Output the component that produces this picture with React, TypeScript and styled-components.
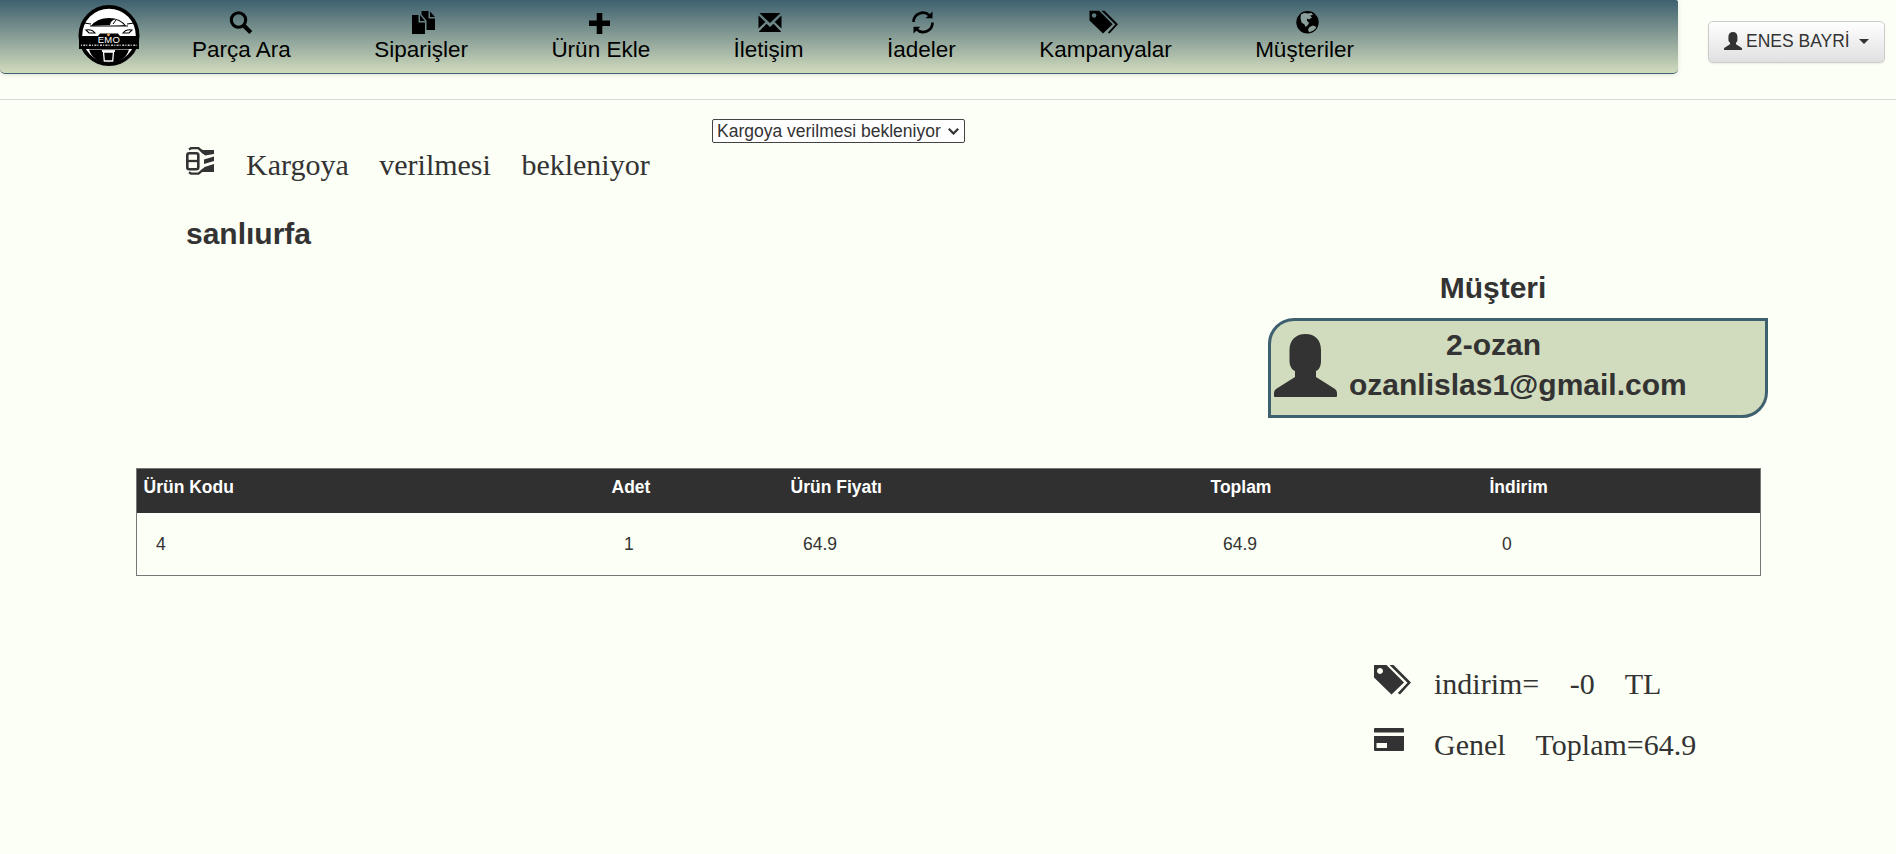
import React from "react";
import styled, { createGlobalStyle } from "styled-components";

const GlobalStyle = createGlobalStyle`
  * { box-sizing: border-box; }
  body {
    margin: 0;
    background: #fcfff5;
    color: #333;
    font-family: "Liberation Sans", Arial, sans-serif;
    font-size: 17.5px;
    line-height: 25px;
  }
`;

const Page = styled.div`
  min-height: 854px;
`;

const Header = styled.header`
  display: flex;
  align-items: flex-start;
  height: 100px;
  border-bottom: 1px solid #d5dbd8;
`;

const NavBar = styled.nav`
  display: flex;
  align-items: flex-start;
  width: 1678px;
  height: 74px;
  padding-left: 78px;
  border-bottom: 1px solid #3e606f;
  border-radius: 0 2px 5px 5px;
  background: linear-gradient(#3e606f, #d1dbbd);
  box-shadow: 0 1px 5px rgba(0, 0, 0, 0.12);
`;

const Logo = styled.svg`
  width: 62px;
  height: 63px;
  margin-top: 4px;
`;

const NavList = styled.ul`
  display: flex;
  gap: 83.4px;
  margin: 0 0 0 52px;
  padding: 10px 0 0;
  list-style: none;
`;

const NavItem = styled.li`
  display: flex;
  flex-direction: column;
  align-items: center;
  gap: 3px;
  color: #000;
  font-size: 22.5px;
  line-height: 26px;
  white-space: nowrap;
`;

const NavIcon = styled.span<{ $shift: number }>`
  transform: translateX(${(p) => p.$shift}px);
`;

const Icon = styled.svg<{ $w: number; $h: number }>`
  display: block;
  flex: none;
  width: ${(p) => p.$w}px;
  height: ${(p) => p.$h}px;
  overflow: visible;
  fill: currentColor;
`;

const UserButton = styled.button`
  display: flex;
  align-items: center;
  width: 177px;
  height: 42px;
  margin: 21px 0 0 30px;
  padding: 0 0 2px 15px;
  border: 1px solid #ccc;
  border-radius: 5px;
  background: linear-gradient(#fff, #e0e0e0);
  box-shadow: 0 1px 2px rgba(0, 0, 0, 0.08);
  color: #333;
  font: 17.5px "Liberation Sans", Arial, sans-serif;
  white-space: nowrap;
`;

const UserName = styled.span`
  margin-left: 4px;
`;

const Caret = styled.span`
  margin: 1px 0 0 9px;
  border: 5px solid transparent;
  border-top-color: #333;
  border-bottom: 0;
`;

const Main = styled.main`
  padding: 18px 135px 0 136px;
`;

const TopRow = styled.section`
  display: flex;
  align-items: flex-start;
  height: 150px;
  padding-left: 50px;
`;

const OrderInfo = styled.div`
  width: 526px;
  padding-top: 27px;
`;

const Line = styled.p`
  display: flex;
  margin: 0;
  font: 30px/40px "Liberation Serif", "Times New Roman", serif;
  word-spacing: 23px;
  white-space: nowrap;
`;

const IconSlot = styled.span<{ $top?: number }>`
  width: 60px;
  padding-top: ${(p) => p.$top ?? 2}px;
`;

const Title = styled.h3`
  margin: 0;
  font-size: 30px;
  line-height: 40px;
  font-weight: bold;
`;

const City = styled(Title)`
  margin-top: 29px;
`;

const SelectBox = styled.div`
  position: relative;
  width: 253px;
  height: 24px;
  margin-top: 1px;
`;

const StatusSelect = styled.select`
  display: block;
  appearance: none;
  width: 253px;
  height: 24px;
  padding: 0 0 1px 4px;
  border: 1px solid #444;
  border-radius: 2px;
  background: #fff;
  color: #333;
  font: 17.5px "Liberation Sans", Arial, sans-serif;
`;

const Chevron = styled.svg`
  position: absolute;
  top: 9px;
  right: 6px;
  width: 11px;
  height: 7px;
  fill: none;
  stroke: #333;
  stroke-width: 2.2;
  pointer-events: none;
`;

const Customer = styled.section`
  width: 500px;
  margin-left: 1132px;
`;

const CustomerTitle = styled(Title)`
  width: 450px;
  text-align: center;
`;

const CustomerCard = styled.div`
  display: flex;
  width: 500px;
  height: 100px;
  margin-top: 10px;
  padding: 4px 0 0 3px;
  border: 3px solid #3e606f;
  border-radius: 26px 0;
  background: #d1dbbd;
`;

const Portrait = styled.div`
  width: 75px;
  padding-top: 9px;
`;

const CustomerText = styled.div`
  display: flex;
  flex-direction: column;
`;

const CustomerName = styled(Title)`
  margin-left: 97px;
`;

const Table = styled.table`
  width: 1625px;
  margin-top: 50px;
  border: 1px solid #777;
  border-spacing: 0;
  table-layout: fixed;
`;

const Th = styled.th<{ $w?: number }>`
  width: ${(p) => (p.$w ? p.$w + "px" : "auto")};
  height: 44px;
  padding: 6px 6px 13px 6.5px;
  background: #303030;
  color: #fff;
  text-align: left;
  vertical-align: top;
`;

const Td = styled.td`
  height: 62px;
  padding: 19px 18px 18px 19px;
  text-align: left;
  vertical-align: top;
`;

const Totals = styled.section`
  display: flex;
  flex-direction: column;
  gap: 21px;
  margin: 88px 0 0 1238px;
`;

const LogoMark = () => (
  <Logo viewBox="0 0 62 63">
    <circle cx="31" cy="31.5" r="30.5" fill="#000" />
    <circle cx="31" cy="31.5" r="26.8" fill="#fff" />
    <path d="M13 22Q19 14 31 14Q43 14 48 22Q36 20 13 22Z" fill="#000" />
    <path d="M32 21Q33 16 37 15.5Q43 17 46 21Z" fill="#fff" />
    <path d="M35 20l3-4" stroke="#000" />
    <path d="M12 22H50M6 19l7 1M49 20l7-1M8 26q6-1 9 3h-6zM54 26q-6-1-9 3h6z" fill="none" stroke="#000" strokeWidth="1.1" />
    <path d="M1 32H20L22 29.5H40L42 32H61V45H1Z" fill="#000" />
    <circle cx="30.5" cy="30.8" r="1.4" fill="#e8a95c" />
    <text x="31" y="39.3" fill="#fff" textAnchor="middle" fontFamily="Liberation Sans" fontSize="9.5" letterSpacing=".3">EMO</text>
    <path d="M3 41.3H59" stroke="#ccc" strokeWidth="1.6" strokeDasharray="1 1.3 2 1 1 1.6 2 1.2" />
    <path d="M11 45.5H51Q47 58.5 31 58.5Q15 58.5 11 45.5Z" fill="#000" />
    <path d="M25.5 48H35.5L34.7 57H26.3Z" fill="#000" stroke="#fff" strokeWidth="1.3" />
    <path d="M24 47H37" stroke="#fff" strokeWidth="1.8" />
  </Logo>
);

const SearchIcon = () => (
  <Icon $w={24} $h={24} viewBox="0 0 24 24">
    <circle cx="9.5" cy="10" r="7.2" fill="none" stroke="currentColor" strokeWidth="3.1" />
    <path d="M14.5 15.2L21.8 22.5" stroke="currentColor" strokeWidth="4.2" />
  </Icon>
);

const CopyIcon = () => (
  <Icon $w={23} $h={24} viewBox="0 0 23 24">
    <path d="M0 5H6.5V12.5H13V24H0ZM8 5L13 11H8Z" />
    <path d="M9.5 1H16.5V8.5H23V20H14.5V10.5L9.5 4.5ZM18 1.5L23 7H18Z" />
  </Icon>
);

const PlusIcon = () => (
  <Icon $w={21} $h={24} viewBox="0 0 21 24">
    <path d="M7.7 3h5.6v7.5H21v5.4h-7.7V24H7.7v-8.1H0v-5.4h7.7z" />
  </Icon>
);

const MailIcon = () => (
  <Icon $w={23} $h={24} viewBox="0 0 23 24">
    <path d="M1 3H22L11.5 13ZM0 5.5L6.8 12L0 18.5ZM23 5.5V18.5L16.2 12ZM8 13.8L11.5 17L15 13.8L22.5 21.5V22H.5V21.5Z" />
  </Icon>
);

const RefreshIcon = () => (
  <Icon $w={22} $h={24} viewBox="0 0 22 24">
    <path d="M1.5 12A9.4 9.4 0 0 1 17.5 5.5M20.5 12.5A9.4 9.4 0 0 1 4.5 19.3" fill="none" stroke="currentColor" strokeWidth="2.6" />
    <path d="M20.5 1.5V8.3H13.7ZM1.5 23.5V16.7H8.3Z" />
  </Icon>
);

const TagsIcon = ({ w = 28.5, h = 24 }: { w?: number; h?: number }) => (
  <Icon $w={w} $h={h} viewBox="0 0 37 31">
    <path fillRule="evenodd" d="M0 1H12.5L30 18.5L17.5 30.5L0 13.5ZM6 4a3 3 0 1 0 .01 0Z" />
    <path d="M15.5 1H19.5L37 18.5L26 30.5L23.8 29L33.5 18.8Z" />
  </Icon>
);

const GlobeIcon = () => (
  <Icon $w={23} $h={24} viewBox="0 0 23 24">
    <circle cx="11.5" cy="12.3" r="11.2" />
    <path d="M5 4.5L8 3L12 3.5L15.5 3L17 5L14 5.5L16 7.5L13 9.5L11 8.5V11L13 12.5L12 15L9.5 17L8.5 14.5L5.5 12.5L4.5 8ZM13.5 17L17 15.5L20.5 17Q18 21.5 13 22.2L12 19.5Z" fill="#8a9e9a" />
  </Icon>
);

const UserIcon = ({ w, h }: { w: number; h: number }) => (
  <Icon $w={w} $h={h} viewBox="0 0 63 63">
    <path d="M15.5 16C15.5 6 22 0 31.5 0S47 6 47 16V27C47 32 45 36 42 37V43L61 55Q63 56.5 63 59V62Q63 63 62 63H1Q0 63 0 62V59Q0 56.5 2 55L21 43V37C18 36 15.5 32 15.5 27Z" />
  </Icon>
);

const PackageIcon = () => (
  <Icon $w={28} $h={28} viewBox="0 0 28 28">
    <path d="M3 2.5L5 1.2H12.5L18 6.5M3 25.3L5 26.6H12.5L18 22" fill="none" stroke="currentColor" strokeWidth="2.3" />
    <rect x="1.3" y="6.2" width="11" height="16" rx="2" fill="none" stroke="currentColor" strokeWidth="2.6" />
    <path d="M1 14H12" stroke="currentColor" strokeWidth="2.3" />
    <path d="M12.5 1L17 3H28V7L19 8.5L16 5.5ZM18 12.5L28 9.5V14L18 17ZM28 17V25H15L18.5 20Z" />
  </Icon>
);

const CreditIcon = () => (
  <Icon $w={30} $h={23} viewBox="0 0 30 23">
    <path fillRule="evenodd" d="M1 0H29Q30 0 30 1V4.5H0V1Q0 0 1 0ZM0 8H30V22Q30 23 29 23H1Q0 23 0 22ZM2.5 15V20H13V15Z" />
  </Icon>
);

const menu = [
  { label: "Parça Ara", icon: <SearchIcon />, shift: 0 },
  { label: "Siparişler", icon: <CopyIcon />, shift: 2 },
  { label: "Ürün Ekle", icon: <PlusIcon />, shift: -1 },
  { label: "İletişim", icon: <MailIcon />, shift: 1.5 },
  { label: "İadeler", icon: <RefreshIcon />, shift: 2 },
  { label: "Kampanyalar", icon: <TagsIcon />, shift: -1.5 },
  { label: "Müşteriler", icon: <GlobeIcon />, shift: 3 },
];

const columns = [
  { label: "Ürün Kodu", width: 468, value: "4" },
  { label: "Adet", width: 179, value: "1" },
  { label: "Ürün Fiyatı", width: 420, value: "64.9" },
  { label: "Toplam", width: 279, value: "64.9" },
  { label: "İndirim", value: "0" },
];

export default function App() {
  return (
    <Page>
      <GlobalStyle />
      <Header>
        <NavBar>
          <LogoMark />
          <NavList>
            {menu.map((m) => (
              <NavItem key={m.label}>
                <NavIcon $shift={m.shift}>{m.icon}</NavIcon>
                <span>{m.label}</span>
              </NavItem>
            ))}
          </NavList>
        </NavBar>
        <UserButton>
          <UserIcon w={18} h={18} />
          <UserName>ENES BAYRİ</UserName>
          <Caret />
        </UserButton>
      </Header>
      <Main>
        <TopRow>
          <OrderInfo>
            <Line>
              <IconSlot $top={2}><PackageIcon /></IconSlot>
              <span>Kargoya verilmesi bekleniyor</span>
            </Line>
            <City>sanlıurfa</City>
          </OrderInfo>
          <SelectBox>
            <StatusSelect>
              <option>Kargoya verilmesi bekleniyor</option>
            </StatusSelect>
            <Chevron viewBox="0 0 11 7"><path d="M.8 .8L5.5 5.5L10.2 .8" /></Chevron>
          </SelectBox>
        </TopRow>
        <Customer>
          <CustomerTitle>Müşteri</CustomerTitle>
          <CustomerCard>
            <Portrait><UserIcon w={63} h={63} /></Portrait>
            <CustomerText>
              <CustomerName>2-ozan</CustomerName>
              <Title>ozanlislas1@gmail.com</Title>
            </CustomerText>
          </CustomerCard>
        </Customer>
        <Table>
          <thead>
            <tr>
              {columns.map((c) => (
                <Th key={c.label} $w={c.width}>{c.label}</Th>
              ))}
            </tr>
          </thead>
          <tbody>
            <tr>
              {columns.map((c) => (
                <Td key={c.label}>{c.value}</Td>
              ))}
            </tr>
          </tbody>
        </Table>
        <Totals>
          <Line>
            <IconSlot $top={0}><TagsIcon w={37} h={31} /></IconSlot>
            <span>indirim= -0 TL</span>
          </Line>
          <Line>
            <IconSlot $top={3}><CreditIcon /></IconSlot>
            <span>Genel Toplam=64.9</span>
          </Line>
        </Totals>
      </Main>
    </Page>
  );
}
